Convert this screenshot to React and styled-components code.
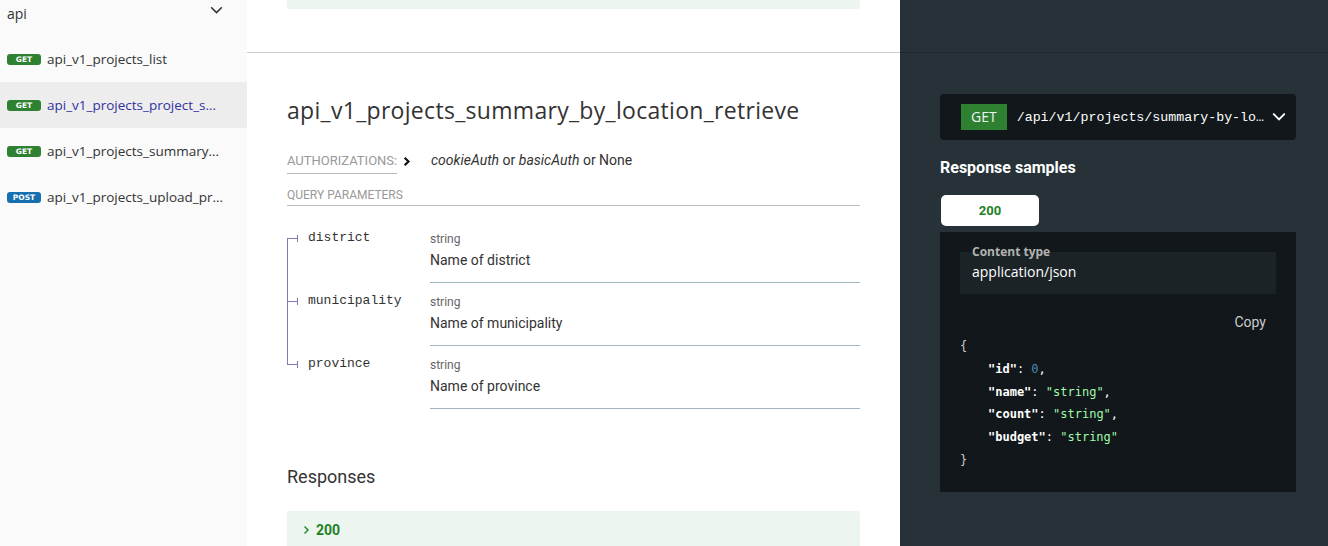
import React from "react";
import styled, { createGlobalStyle } from "styled-components";

const GlobalStyle = createGlobalStyle`
  html, body {
    margin: 0;
    padding: 0;
    background: #ffffff;
  }
  * {
    box-sizing: border-box;
  }
`;

const Page = styled.div`
  display: flex;
  width: 1328px;
  height: 546px;
  overflow: hidden;
  font-family: Roboto, "Liberation Sans", sans-serif;
  color: #333333;
`;

/* ---------- sidebar ---------- */

const Sidebar = styled.nav`
  width: 247px;
  flex-shrink: 0;
  background: #fafafa;
  display: flex;
  flex-direction: column;
`;

const GroupHeader = styled.div`
  height: 36px;
  padding: 4px 24px 0 7px;
  display: flex;
  justify-content: space-between;
  align-items: flex-start;
  font-family: "Open Sans", sans-serif;
  font-size: 14px;
  line-height: 20px;
  color: #333333;
`;

const NavItem = styled.div`
  height: 46px;
  padding: 0 23px 0 7px;
  display: flex;
  align-items: center;
  background: ${(p) => (p.$active ? "#ededed" : "transparent")};
`;

const MethodBadge = styled.span`
  width: 34px;
  height: 11px;
  flex-shrink: 0;
  margin-right: 6px;
  border-radius: 3px;
  background: ${(p) => (p.$method === "post" ? "#186faf" : "#2f8132")};
  color: #ffffff;
  font-family: "DejaVu Sans", Verdana, sans-serif;
  font-size: 7.5px;
  font-weight: bold;
  line-height: 11px;
  text-align: center;
  text-transform: uppercase;
`;

const NavLabel = styled.span`
  font-family: "Open Sans", sans-serif;
  font-size: 13.5px;
  color: ${(p) => (p.$active ? "#32329f" : "#333333")};
  white-space: nowrap;
  overflow: hidden;
  text-overflow: ellipsis;
`;

/* ---------- content rows ---------- */

const Content = styled.main`
  flex: 1;
  min-width: 0;
  display: flex;
  flex-direction: column;
`;

const Row = styled.section`
  display: flex;
  flex: ${(p) => (p.$grow ? 1 : "none")};
  height: ${(p) => (p.$height ? `${p.$height}px` : "auto")};
`;

const Middle = styled.div`
  width: 653px;
  flex-shrink: 0;
  padding: ${(p) => (p.$top ? "0 40px" : "40px 40px 0")};
  background: #ffffff;
  border-bottom: ${(p) => (p.$divider ? "1px solid #cccccc" : "none")};
`;

const Right = styled.div`
  flex: 1;
  min-width: 0;
  background: #263238;
  padding: ${(p) => (p.$top ? "0" : "41px 32px 0 40px")};
  border-bottom: ${(p) => (p.$divider ? "1px solid #1f292e" : "none")};
`;

const PrevResponseTail = styled.div`
  height: 9px;
  border-radius: 0 0 2px 2px;
  background: #edf6ee;
`;

/* ---------- middle panel ---------- */

const Title = styled.h2`
  margin: 2px 0 0;
  font-family: "Open Sans", sans-serif;
  font-weight: 400;
  font-size: 23px;
  letter-spacing: 0.3px;
  line-height: 30px;
  color: #333333;
`;

const AuthRow = styled.div`
  margin-top: 24px;
  display: flex;
  align-items: flex-start;
  height: 24px;
`;

const AuthLabel = styled.span`
  font-size: 13px;
  color: #999999;
  text-transform: uppercase;
  line-height: 16px;
  padding: 4px 0 4px;
  border-bottom: 1px solid #b8b8b8;
`;

const AuthToggle = styled.span`
  display: inline-flex;
  margin: 7px 20px 0 6px;
`;

const AuthSchemes = styled.span`
  padding-top: 1px;
  font-size: 14px;
  line-height: 20px;
  color: #333333;

  i {
    font-style: italic;
  }
`;

const SectionLabel = styled.div`
  margin-top: 15px;
  padding-bottom: 3px;
  font-size: 12px;
  line-height: 14px;
  color: #999999;
  text-transform: uppercase;
  border-bottom: 1px solid #bbbbbb;
`;

const ParamTable = styled.div`
  margin-top: 14px;
  display: flex;
  flex-direction: column;
`;

const ParamRow = styled.div`
  display: flex;
`;

const NameCell = styled.div`
  position: relative;
  width: 143px;
  flex-shrink: 0;
  padding: 9px 0 0 0;
  display: flex;
  align-items: flex-start;

  &::before {
    content: "";
    position: absolute;
    left: 0;
    width: 1px;
    background: #7c7cbb;
    top: ${(p) => (p.$first ? "18px" : "0")};
    bottom: ${(p) => (p.$last ? "auto" : "0")};
    height: ${(p) => (p.$last ? "19px" : "auto")};
  }
`;

const Bullet = styled.span`
  display: inline-flex;
  align-items: center;
  height: 18px;
  margin-right: 10px;

  &::before {
    content: "";
    width: 10px;
    height: 1px;
    background: #7c7cbb;
  }

  &::after {
    content: "";
    width: 1px;
    height: 7px;
    background: #7c7cbb;
  }
`;

const ParamName = styled.span`
  font-family: "Liberation Mono", Courier, monospace;
  font-size: 13px;
  line-height: 18px;
  color: #333333;
`;

const DetailCell = styled.div`
  flex: 1;
  padding: 11px 0 12px;
  border-bottom: 1px solid #9fb4be;
`;

const TypeText = styled.div`
  font-size: 12px;
  line-height: 16px;
  color: #666666;
`;

const Description = styled.div`
  margin-top: 3px;
  font-size: 14px;
  line-height: 20px;
  color: #333333;
`;

const ResponsesTitle = styled.h3`
  margin: 56px 0 0;
  font-size: 18px;
  font-weight: 400;
  line-height: 24px;
  color: #333333;
`;

const ResponseButton = styled.div`
  margin-top: 22px;
  padding: 9px 16px;
  display: flex;
  align-items: center;
  gap: 6px;
  background: #edf6ee;
  border-radius: 2px;
  color: #1d8127;
  font-size: 14px;
  font-weight: 700;
  line-height: 20px;
`;

/* ---------- right panel ---------- */

const Endpoint = styled.div`
  height: 46px;
  padding: 0 10px 0 21px;
  display: flex;
  align-items: center;
  background: #11171a;
  border-radius: 4px;
`;

const EndpointMethod = styled.span`
  height: 26px;
  padding: 0 10px;
  flex-shrink: 0;
  background: #2f8132;
  color: #eef5f5;
  font-family: "Open Sans", sans-serif;
  font-size: 14px;
  line-height: 26px;
`;

const EndpointPath = styled.span`
  flex: 1;
  min-width: 0;
  margin: 0 5px 0 10px;
  font-family: "Liberation Mono", Courier, monospace;
  font-size: 13.3px;
  color: #ffffff;
  white-space: nowrap;
  overflow: hidden;
  text-overflow: ellipsis;
`;

const SamplesTitle = styled.h3`
  margin: 18px 0 0;
  font-size: 16px;
  font-weight: 700;
  line-height: 20px;
  color: #ffffff;
`;

const Tab = styled.div`
  margin: 17px 0 0 1px;
  width: 98px;
  height: 31px;
  display: flex;
  align-items: center;
  justify-content: center;
  background: #ffffff;
  border-radius: 5px;
  color: #1d8127;
  font-size: 13px;
  font-weight: 700;
`;

const SampleBox = styled.div`
  margin-top: 6px;
  padding: 20px;
  background: #11171a;
`;

const ContentType = styled.div`
  position: relative;
  height: 42px;
  padding: 10px 12px 12px;
  background: #1b2327;
  color: #ffffff;
  font-family: "Open Sans", sans-serif;
  font-size: 14px;
  line-height: 20px;
`;

const ContentTypeLabel = styled.span`
  position: absolute;
  left: 12px;
  top: -8px;
  font-family: "Open Sans", sans-serif;
  font-size: 12px;
  font-weight: 700;
  line-height: 16px;
  color: #b3b3b3;
`;

const CopyRow = styled.div`
  margin-top: 18px;
  padding-right: 10px;
  display: flex;
  justify-content: flex-end;
  font-size: 14px;
  line-height: 20px;
  color: #cccccc;
`;

const Code = styled.div`
  margin-top: 3px;
  font-family: "DejaVu Sans Mono", Consolas, monospace;
  font-size: 12px;
  line-height: 22.8px;
  color: #cccccc;
`;

const CodeLine = styled.div`
  padding-left: ${(p) => (p.$indent ? "28px" : "0")};
  white-space: pre;
`;

const Key = styled.span`
  color: #ffffff;
  font-weight: 700;
`;

const Str = styled.span`
  color: #a0fbaa;
`;

const Num = styled.span`
  color: #4a8bb3;
`;

const Punct = styled.span`
  color: #ffffff;
`;

/* ---------- icons ---------- */

const ChevronDown = ({ color = "#333", size = 12, width = 1.6 }) => (
  <svg width={size} height={size} viewBox="0 0 12 12" style={{ flexShrink: 0 }}>
    <polyline
      points="1.5,3.5 6,8 10.5,3.5"
      fill="none"
      stroke={color}
      strokeWidth={width}
      strokeLinecap="round"
    />
  </svg>
);

const ChevronRight = ({ color = "#333", size = 10, width = 1.6 }) => (
  <svg width={size * 0.7} height={size} viewBox="0 0 7 10">
    <polyline
      points="1.5,1.5 5,5 1.5,8.5"
      fill="none"
      stroke={color}
      strokeWidth={width}
    />
  </svg>
);

const navItems = [
  { method: "get", label: "api_v1_projects_list" },
  { method: "get", label: "api_v1_projects_project_summary_retrieve", active: true },
  { method: "get", label: "api_v1_projects_summary_by_location_retrieve" },
  { method: "post", label: "api_v1_projects_upload_projects_create" },
];

const params = [
  { name: "district", desc: "Name of district" },
  { name: "municipality", desc: "Name of municipality" },
  { name: "province", desc: "Name of province" },
];

const App = () => (
  <>
    <GlobalStyle />
    <Page>
      <Sidebar>
        <GroupHeader>
          <span>api</span>
          <ChevronDown color="#333" size={13} width={1.5} />
        </GroupHeader>
        {navItems.map((item) => (
          <NavItem key={item.label} $active={item.active}>
            <MethodBadge $method={item.method}>{item.method}</MethodBadge>
            <NavLabel $active={item.active}>{item.label}</NavLabel>
          </NavItem>
        ))}
      </Sidebar>

      <Content>
        <Row $height={53}>
          <Middle $top $divider>
            <PrevResponseTail />
          </Middle>
          <Right $top $divider />
        </Row>

        <Row $grow>
          <Middle>
            <Title>api_v1_projects_summary_by_location_retrieve</Title>

            <AuthRow>
              <AuthLabel>Authorizations:</AuthLabel>
              <AuthToggle>
                <ChevronRight color="#111" size={11} width={2} />
              </AuthToggle>
              <AuthSchemes>
                <i>cookieAuth</i> or <i>basicAuth</i> or None
              </AuthSchemes>
            </AuthRow>

            <SectionLabel>Query Parameters</SectionLabel>

            <ParamTable>
              {params.map((p, i) => (
                <ParamRow key={p.name}>
                  <NameCell $first={i === 0} $last={i === params.length - 1}>
                    <Bullet />
                    <ParamName>{p.name}</ParamName>
                  </NameCell>
                  <DetailCell>
                    <TypeText>string</TypeText>
                    <Description>{p.desc}</Description>
                  </DetailCell>
                </ParamRow>
              ))}
            </ParamTable>

            <ResponsesTitle>Responses</ResponsesTitle>
            <ResponseButton>
              <ChevronRight color="#1d8127" size={10} width={1.4} />
              200
            </ResponseButton>
          </Middle>

          <Right>
            <Endpoint>
              <EndpointMethod>GET</EndpointMethod>
              <EndpointPath>/api/v1/projects/summary-by-location/</EndpointPath>
              <ChevronDown color="#ffffff" size={14} width={1.6} />
            </Endpoint>

            <SamplesTitle>Response samples</SamplesTitle>
            <Tab>200</Tab>

            <SampleBox>
              <ContentType>
                <ContentTypeLabel>Content type</ContentTypeLabel>
                application/json
              </ContentType>
              <CopyRow>Copy</CopyRow>
              <Code>
                <CodeLine>{"{"}</CodeLine>
                <CodeLine $indent>
                  <Key>"id"</Key>
                  <Punct>: </Punct>
                  <Num>0</Num>
                  <Punct>,</Punct>
                </CodeLine>
                <CodeLine $indent>
                  <Key>"name"</Key>
                  <Punct>: </Punct>
                  <Str>"string"</Str>
                  <Punct>,</Punct>
                </CodeLine>
                <CodeLine $indent>
                  <Key>"count"</Key>
                  <Punct>: </Punct>
                  <Str>"string"</Str>
                  <Punct>,</Punct>
                </CodeLine>
                <CodeLine $indent>
                  <Key>"budget"</Key>
                  <Punct>: </Punct>
                  <Str>"string"</Str>
                </CodeLine>
                <CodeLine>{"}"}</CodeLine>
              </Code>
            </SampleBox>
          </Right>
        </Row>
      </Content>
    </Page>
  </>
);

export default App;
